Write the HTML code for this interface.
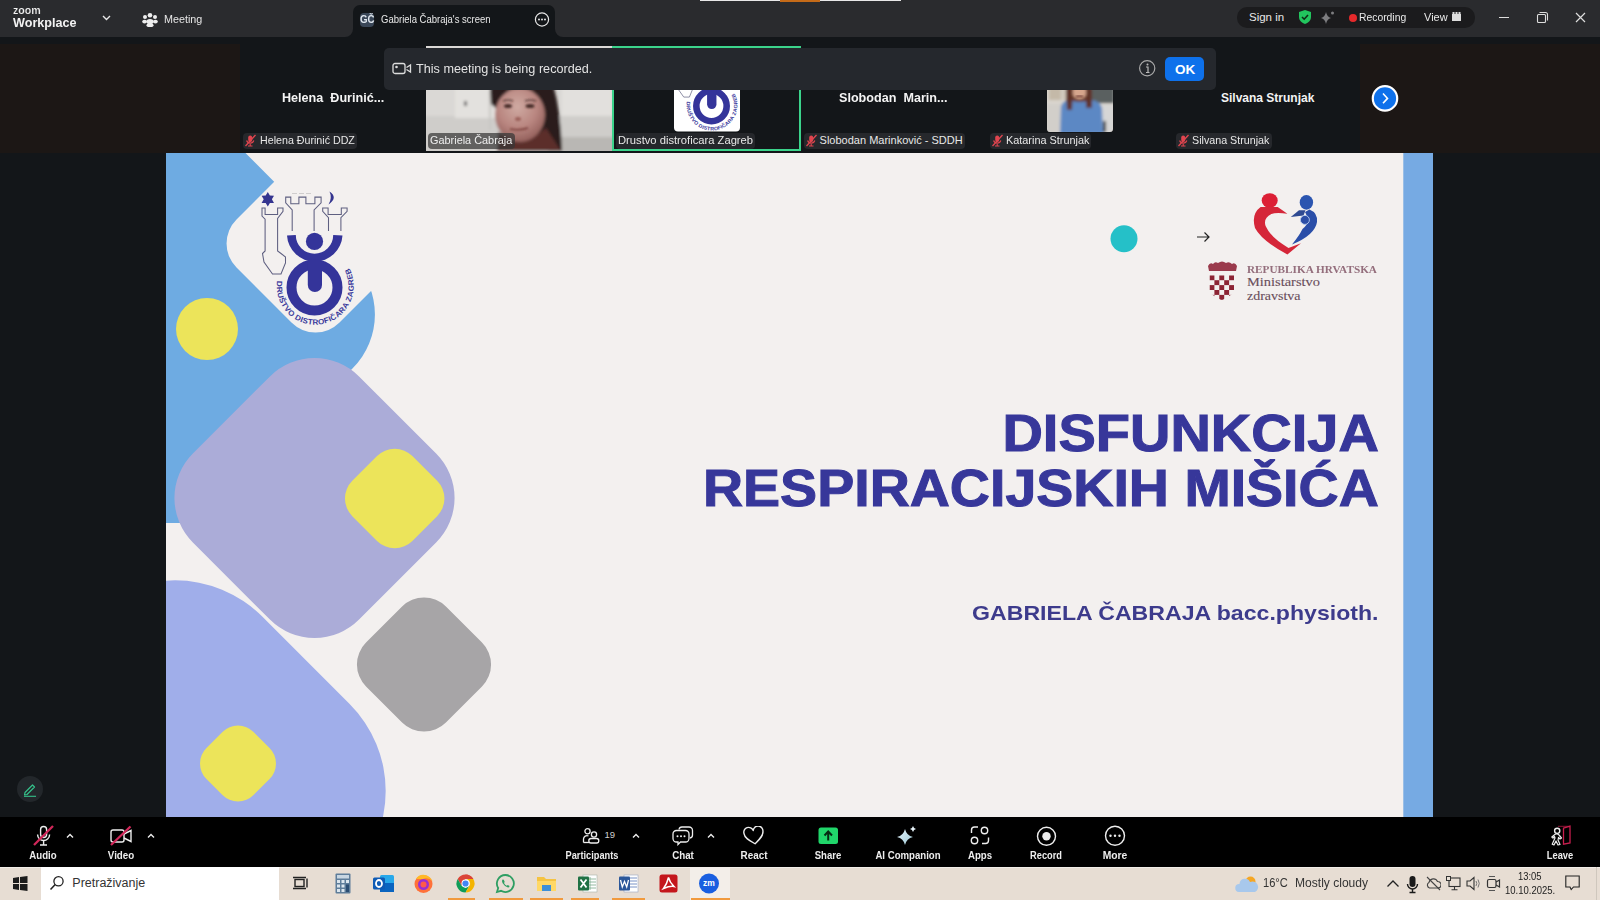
<!DOCTYPE html>
<html><head><meta charset="utf-8">
<style>
*{margin:0;padding:0;box-sizing:border-box}
html,body{width:1600px;height:900px;overflow:hidden;background:#131619;font-family:"Liberation Sans",sans-serif;color:#fff}
.a{position:absolute}
.t{position:absolute;white-space:nowrap;line-height:1}
</style></head><body>
<div class="a" style="left:0;top:0;width:1600px;height:37px;background:#2a2b2e"></div>
<div class="a" style="left:700px;top:0;width:201px;height:1px;background:#e8e8e8"></div>
<div class="a" style="left:780px;top:0;width:40px;height:2px;background:#c46a18"></div>
<div class="t" style="left:12.5px;top:4.69px;font-size:11px;font-weight:bold;color:#f2f2f2;transform:scaleX(0.97);transform-origin:left top;-webkit-text-stroke:0.2px #2a2b2e;">zoom</div>
<div class="t" style="left:13px;top:16.07px;font-size:13.5px;font-weight:bold;color:#f2f2f2;transform:scaleX(0.934);transform-origin:left top;">Workplace</div>
<svg class="a" style="left:100px;top:13px" width="14" height="10"><polyline points="3,3 6.5,6.5 10,3" fill="none" stroke="#e8e8e8" stroke-width="1.4"/></svg>
<svg class="a" style="left:142px;top:12px" width="16" height="16" viewBox="0 0 16 16">
<circle cx="8" cy="3.2" r="2.3" fill="#eee"/><circle cx="3" cy="5" r="2" fill="#eee"/><circle cx="13" cy="5" r="2" fill="#eee"/>
<ellipse cx="8" cy="9.5" rx="3.6" ry="2.6" fill="#eee"/><ellipse cx="2.6" cy="9.6" rx="2.4" ry="1.9" fill="#eee"/><ellipse cx="13.4" cy="9.6" rx="2.4" ry="1.9" fill="#eee"/>
<rect x="4.5" y="11.5" width="7" height="3.5" rx="1.7" fill="#eee"/></svg>
<div class="t" style="left:164px;top:14.27px;font-size:11.5px;font-weight:normal;color:#e6e6e6;transform:scaleX(0.936);transform-origin:left top;">Meeting</div>
<div class="a" style="left:353px;top:5px;width:202px;height:40px;background:#131619;border-radius:7px 7px 0 0"></div>
<svg class="a" style="left:345px;top:29px" width="8" height="8"><path d="M0,8 A8,8 0 0 0 8,0 V8 Z" fill="#131619"/></svg>
<svg class="a" style="left:555px;top:29px" width="8" height="8"><path d="M8,8 A8,8 0 0 1 0,0 V8 Z" fill="#131619"/></svg>
<div class="a" style="left:360px;top:13.4px;width:14px;height:14px;background:#3a4758;border-radius:4px"></div>
<div class="t" style="left:359.5px;top:15.34px;font-size:10px;font-weight:bold;color:#dfe6ee;transform:scaleX(0.97);transform-origin:left top;">GČ</div>
<div class="t" style="left:381px;top:14.39px;font-size:11px;font-weight:normal;color:#e8e8e8;transform:scaleX(0.864);transform-origin:left top;">Gabriela Čabraja's screen</div>
<svg class="a" style="left:533px;top:11px" width="18" height="18" viewBox="0 0 18 18"><circle cx="9" cy="8.5" r="6.6" fill="none" stroke="#e6e6e6" stroke-width="1.2"/>
<circle cx="6" cy="8.5" r="0.95" fill="#eee"/><circle cx="9" cy="8.5" r="0.95" fill="#eee"/><circle cx="12" cy="8.5" r="0.95" fill="#eee"/></svg>
<div class="a" style="left:1237px;top:7px;width:238px;height:21px;background:#1b1b1d;border-radius:10px"></div>
<div class="t" style="left:1249px;top:11.52px;font-size:11.5px;font-weight:normal;color:#e8e8e8;">Sign in</div>
<svg class="a" style="left:1297px;top:9px" width="16" height="16" viewBox="0 0 16 16"><path d="M8,1 L14,3 V8 C14,11.5 11,14 8,15 C5,14 2,11.5 2,8 V3 Z" fill="#22c55e"/>
<polyline points="5,8 7.2,10.2 11,6" fill="none" stroke="#0d2a14" stroke-width="1.6"/></svg>
<svg class="a" style="left:1320px;top:10px" width="16" height="14" viewBox="0 0 16 14"><path d="M6,2 Q7,7 11,8 Q7,9 6,14 Q5,9 1,8 Q5,7 6,2 Z" fill="#7d7d80"/><circle cx="12.5" cy="3" r="1.5" fill="#7d7d80"/></svg>
<div class="a" style="left:1349px;top:13.5px;width:8px;height:8px;background:#e5292b;border-radius:50%"></div>
<div class="t" style="left:1359px;top:11.52px;font-size:11.5px;font-weight:normal;color:#e8e8e8;transform:scaleX(0.9);transform-origin:left top;">Recording</div>
<div class="t" style="left:1424px;top:11.52px;font-size:11.5px;font-weight:normal;color:#e8e8e8;transform:scaleX(0.955);transform-origin:left top;">View</div>
<svg class="a" style="left:1451px;top:11px" width="11" height="11" viewBox="0 0 11 11"><rect x="1" y="3" width="9" height="7" fill="#ddd"/><rect x="1.5" y="1" width="2" height="2" fill="#ddd"/><rect x="4.5" y="1" width="2" height="2" fill="#ddd"/><rect x="7.5" y="1" width="2" height="2" fill="#ddd"/></svg>
<div class="a" style="left:1499px;top:16.5px;width:10px;height:1.2px;background:#ddd"></div>
<svg class="a" style="left:1536px;top:11px" width="13" height="13" viewBox="0 0 13 13"><rect x="1.5" y="3.5" width="8" height="8" rx="1" fill="none" stroke="#ddd" stroke-width="1.1"/><path d="M3.5,1.5 H9.5 A2,2 0 0 1 11.5,3.5 V9.5" fill="none" stroke="#ddd" stroke-width="1.1"/></svg>
<svg class="a" style="left:1575px;top:11.5px" width="11" height="11" viewBox="0 0 11 11"><path d="M1,1 L10,10 M10,1 L1,10" stroke="#ddd" stroke-width="1.2"/></svg>
<div class="a" style="left:0;top:44px;width:240px;height:109px;background:#1c1715"></div>
<div class="a" style="left:1360px;top:44px;width:240px;height:109px;background:#1c1715"></div>
<svg class="a" style="left:426px;top:46px" width="186" height="105" viewBox="426 46 186 105">
<defs><filter id="bl" x="-10%" y="-10%" width="120%" height="120%"><feGaussianBlur stdDeviation="1.8"/></filter>
<filter id="bl2"><feGaussianBlur stdDeviation="0.8"/></filter>
<radialGradient id="face" cx="0.45" cy="0.35" r="0.7"><stop offset="0" stop-color="#cfaaa2"/><stop offset="0.55" stop-color="#b98680"/><stop offset="1" stop-color="#8e5a56"/></radialGradient></defs>
<rect x="426" y="46" width="186" height="105" fill="#dad8d5"/>
<g filter="url(#bl)">
<rect x="420" y="116" width="200" height="40" fill="#cfcdca"/>
<rect x="548" y="137" width="70" height="16" fill="#b9b7b4"/>
<rect x="455" y="88" width="42" height="30" fill="#e3e1de"/>
<rect x="562" y="86" width="50" height="30" fill="#e2e0dd"/>
<rect x="464" y="101" width="3" height="5" fill="#6a6a6a"/>
<rect x="489" y="90" width="2" height="40" fill="#c8c6c3"/>
<path d="M490,84 H553 Q561,112 562,151 H520 L520,120 L498,110 L491,104 Z" fill="#2a1d1b"/>
<path d="M498,132 Q522,148 546,128 L561,151 H497 Z" fill="#5c2e2b"/>
<ellipse cx="520" cy="115" rx="25" ry="27" fill="url(#face)"/>
</g>
<g filter="url(#bl2)">
<ellipse cx="508" cy="106" rx="4" ry="2" fill="#4a2e2c"/>
<ellipse cx="530" cy="106" rx="4.5" ry="2" fill="#4a2e2c"/>
<path d="M503,101 Q508,99 513,101 M525,101 Q531,99 536,101" stroke="#3a2422" stroke-width="1.2" fill="none"/>
<ellipse cx="518" cy="119" rx="3" ry="2" fill="#9c605a"/>
<path d="M510,129 Q519,131 528,128" stroke="#7a3e3a" stroke-width="1.5" fill="none"/>
</g>
</svg>
<svg class="a" style="left:1047px;top:46px" width="66" height="86" viewBox="1047 46 66 86">
<defs><clipPath id="kc"><path d="M1047,52 H1113 V128.5 A3.5,3.5 0 0 1 1109.5,132 H1050.5 A3.5,3.5 0 0 1 1047,128.5 Z"/></clipPath></defs>
<g clip-path="url(#kc)">
<rect x="1047" y="46" width="66" height="86" fill="#d9d5ce"/>
<g filter="url(#bl)">
<rect x="1049" y="86" width="12" height="14" fill="#c4b9a8"/>
<rect x="1062" y="86" width="6" height="14" fill="#d0c8bb"/>
<rect x="1092" y="86" width="22" height="17" fill="#5a6060"/>
<rect x="1047" y="104" width="18" height="30" fill="#d2cfca"/>
<rect x="1095" y="105" width="18" height="27" fill="#d6d6d6"/>
<path d="M1066,86 H1091 V109 H1066 Z" fill="#6b3b2b"/>
<ellipse cx="1079.5" cy="92" rx="7" ry="7" fill="#d6a58c"/>
<path d="M1060,134 L1061,106 Q1064,100 1070,100 Q1080,104 1090,100 Q1099,100 1102,108 L1103,134 Z" fill="#5b88c4"/>
<rect x="1103" y="121" width="3" height="11" fill="#3a3a3a"/>
<path d="M1066,88 H1073 L1072,110 H1067 Z M1086,88 H1092 L1092,108 H1086 Z" fill="#5e3326"/>
</g>
<rect x="1076" y="95.5" width="7" height="1.5" fill="#5a2a22" filter="url(#bl2)"/>
</g>
</svg>
<div class="a" style="left:612px;top:45.5px;width:189px;height:105.5px;border:2px solid #3bd38b"></div>
<svg class="a" style="left:674px;top:60px" width="66" height="72" viewBox="674 60 66 72">
<rect x="674" y="60" width="66" height="71.5" rx="4" fill="#ffffff"/>
<g transform="translate(711.5,106) scale(0.66) translate(-314.5,-287.5)">
<g fill="none" stroke="#5e5f80" stroke-width="1.05" stroke-linejoin="miter">
<path d="M292.2,230.9 V209.9 L285.7,202.9 V197.1 H290.8 V203.7 H298.9 V197.1 H305.9 V203.7 H314.9 V197.1 H321.1 V202.9 L314.1,209.9 V230.9"/>
<path d="M265.1,251 V219.2 L262,216.1 V207.9 H265.1 V214.5 H277.6 V207.9 H283 V211.4 L277.6,218.4 V251 L281,253.5 L285.5,257 V263 L281,274 H272.5 L264,262 L262.5,253.5 Z"/>
<path d="M328.5,230.9 V217.7 L322.7,211.4 V207.9 H328.1 V214.5 H341.3 V207.9 H347.1 V211.4 L340.9,217.7 V230.9"/>
<path d="M292,193.5 H297 M299,193.5 H304 M306,193.5 H311" stroke-width="0.5" stroke="#aaa"/>
</g>
<path d="M267.8,192 L269.9,195.6 L274,195.7 L271.9,199.3 L274,202.9 L269.9,203 L267.8,206.6 L265.7,203 L261.6,202.9 L263.7,199.3 L261.6,195.7 L265.7,195.6 Z" fill="#34348f"/>
<path d="M329.5,191.5 Q338.5,197.5 328.5,204.5 Q332.5,198 329.5,191.5 Z" fill="#34348f"/>
<circle cx="314.5" cy="241.4" r="8.6" fill="#34349a"/>
<path d="M287,235.5 A27.8,27.8 0 0 0 342.5,235.5 L333.2,235 A18.7,18.7 0 0 1 295.8,235 Z" fill="#34349a"/>
<circle cx="314.5" cy="287.5" r="23" fill="none" stroke="#34349a" stroke-width="10"/>
<path d="M307.8,262 H322 V285 A7.1,7.1 0 0 1 307.8,285 Z" fill="#34349a"/>
<path id="arct" d="M277.1,280.9 A38.5,38.5 0 1 0 348.3,266.5" fill="none"/>
<text font-family="Liberation Sans" font-weight="bold" font-size="7.6" fill="#3a3a9c" letter-spacing="0.2"><textPath href="#arct" textLength="145" lengthAdjust="spacingAndGlyphs">DRUŠTVO DISTROFIČARA ZAGREB</textPath></text>
</g>
</svg>
<div class="a" style="left:384px;top:48px;width:832px;height:42px;background:#25282d;border-radius:5px"></div>
<svg class="a" style="left:392px;top:62px" width="20" height="13" viewBox="0 0 20 13"><rect x="1" y="1.5" width="12" height="10" rx="2" fill="none" stroke="#ddd" stroke-width="1.3"/><circle cx="4.5" cy="5" r="1.3" fill="#ddd"/><path d="M14.5,5.5 L18.5,3 V10 L14.5,7.5" fill="none" stroke="#ddd" stroke-width="1.3"/></svg>
<div class="t" style="left:416px;top:61.80px;font-size:13px;font-weight:normal;color:#e3e3e3;transform:scaleX(0.972);transform-origin:left top;">This meeting is being recorded.</div>
<svg class="a" style="left:1138px;top:59px" width="19" height="19" viewBox="0 0 19 19"><circle cx="9.2" cy="9.3" r="7.6" fill="none" stroke="#aaa" stroke-width="1.2"/><circle cx="9.5" cy="5.6" r="1" fill="#bbb"/><path d="M8,8 H10 V13.5 M8,13.5 H11.5" fill="none" stroke="#bbb" stroke-width="1.2"/></svg>
<div class="a" style="left:1165px;top:57px;width:39px;height:23.5px;background:#0e71eb;border-radius:5px"></div>
<div class="t" style="left:1175px;top:62.57px;font-size:13.5px;font-weight:bold;color:#fff;">OK</div>
<div class="t" style="left:282px;top:92.09px;font-size:12px;font-weight:bold;color:#f4f4f4;transform:scaleX(1.05);transform-origin:left top;">Helena&nbsp; Đurinić...</div>
<div class="t" style="left:839px;top:92.09px;font-size:12px;font-weight:bold;color:#f4f4f4;transform:scaleX(1.05);transform-origin:left top;">Slobodan&nbsp; Marin...</div>
<div class="t" style="left:1221px;top:92.09px;font-size:12px;font-weight:bold;color:#f4f4f4;">Silvana Strunjak</div>
<div class="a" style="left:243px;top:133px;width:114px;height:15.5px;background:#26282c;border-radius:4px"></div><svg class="a" style="left:244px;top:134px" width="13" height="13" viewBox="0 0 13 13"><rect x="4.2" y="1.5" width="4" height="6.5" rx="2" fill="#e0454f"/><path d="M2.6,6.5 A3.8,3.8 0 0 0 9.8,6.5" fill="none" stroke="#e0454f" stroke-width="1.2"/><path d="M6.2,10 V12 M4,12 H8.5" stroke="#e0454f" stroke-width="1.1"/><path d="M1.5,12 L11.5,1" stroke="#e0454f" stroke-width="1.3"/></svg><div class="t" style="left:259.5px;top:135.44px;font-size:11px;font-weight:normal;color:#e8e8e8;transform:scaleX(0.97);transform-origin:left top;">Helena Đurinić DDZ</div>
<div class="a" style="left:428px;top:133px;width:87px;height:15.5px;background:rgba(55,55,55,0.72);border-radius:4px"></div>
<div class="t" style="left:430px;top:135.44px;font-size:11px;font-weight:normal;color:#eeeeee;transform:scaleX(0.99);transform-origin:left top;">Gabriela Čabraja</div>
<div class="a" style="left:616px;top:133px;width:139px;height:15.5px;background:#25272b;border-radius:4px"></div>
<div class="t" style="left:617.6px;top:135.44px;font-size:11px;font-weight:normal;color:#e8e8e8;transform:scaleX(1.018);transform-origin:left top;">Drustvo distroficara Zagreb</div>
<div class="a" style="left:803.5px;top:133px;width:161.5px;height:15.5px;background:#26282c;border-radius:4px"></div><svg class="a" style="left:804.5px;top:134px" width="13" height="13" viewBox="0 0 13 13"><rect x="4.2" y="1.5" width="4" height="6.5" rx="2" fill="#e0454f"/><path d="M2.6,6.5 A3.8,3.8 0 0 0 9.8,6.5" fill="none" stroke="#e0454f" stroke-width="1.2"/><path d="M6.2,10 V12 M4,12 H8.5" stroke="#e0454f" stroke-width="1.1"/><path d="M1.5,12 L11.5,1" stroke="#e0454f" stroke-width="1.3"/></svg><div class="t" style="left:819.6px;top:135.44px;font-size:11px;font-weight:normal;color:#e8e8e8;">Slobodan Marinković - SDDH</div>
<div class="a" style="left:989.5px;top:133px;width:101.5px;height:15.5px;background:#26282c;border-radius:4px"></div><svg class="a" style="left:990.5px;top:134px" width="13" height="13" viewBox="0 0 13 13"><rect x="4.2" y="1.5" width="4" height="6.5" rx="2" fill="#e0454f"/><path d="M2.6,6.5 A3.8,3.8 0 0 0 9.8,6.5" fill="none" stroke="#e0454f" stroke-width="1.2"/><path d="M6.2,10 V12 M4,12 H8.5" stroke="#e0454f" stroke-width="1.1"/><path d="M1.5,12 L11.5,1" stroke="#e0454f" stroke-width="1.3"/></svg><div class="t" style="left:1006px;top:135.44px;font-size:11px;font-weight:normal;color:#e8e8e8;transform:scaleX(0.988);transform-origin:left top;">Katarina Strunjak</div>
<div class="a" style="left:1176px;top:133px;width:96px;height:15.5px;background:#26282c;border-radius:4px"></div><svg class="a" style="left:1177px;top:134px" width="13" height="13" viewBox="0 0 13 13"><rect x="4.2" y="1.5" width="4" height="6.5" rx="2" fill="#e0454f"/><path d="M2.6,6.5 A3.8,3.8 0 0 0 9.8,6.5" fill="none" stroke="#e0454f" stroke-width="1.2"/><path d="M6.2,10 V12 M4,12 H8.5" stroke="#e0454f" stroke-width="1.1"/><path d="M1.5,12 L11.5,1" stroke="#e0454f" stroke-width="1.3"/></svg><div class="t" style="left:1192px;top:135.44px;font-size:11px;font-weight:normal;color:#e8e8e8;transform:scaleX(0.974);transform-origin:left top;">Silvana Strunjak</div>
<svg class="a" style="left:1370px;top:83px" width="30" height="30" viewBox="0 0 30 30"><circle cx="15" cy="15.4" r="12.2" fill="#0e71eb" stroke="#fff" stroke-width="2.2"/><polyline points="13,10.5 17.5,15.4 13,20.3" fill="none" stroke="#fff" stroke-width="1.6"/></svg>
<div class="a" id="slide" style="left:166px;top:153px;width:1267px;height:664px;background:#f3f0ef;overflow:hidden">
<svg class="a" style="left:0;top:0" width="1267" height="664" viewBox="166 153 1267 664">
<path d="M166,153 H245.5 L352.7,260.8 A76,76 0 0 1 352.7,368.2 L198,523 L166,523 Z" fill="#6eabe2"/>
<rect x="242.7" y="170.7" width="145.7" height="145.7" rx="34" fill="#f3f0ef" transform="rotate(45 315.5 243.5)"/>

<g fill="none" stroke="#5e5f80" stroke-width="1.05" stroke-linejoin="miter">
<path d="M292.2,230.9 V209.9 L285.7,202.9 V197.1 H290.8 V203.7 H298.9 V197.1 H305.9 V203.7 H314.9 V197.1 H321.1 V202.9 L314.1,209.9 V230.9"/>
<path d="M265.1,251 V219.2 L262,216.1 V207.9 H265.1 V214.5 H277.6 V207.9 H283 V211.4 L277.6,218.4 V251 L281,253.5 L285.5,257 V263 L281,274 H272.5 L264,262 L262.5,253.5 Z"/>
<path d="M328.5,230.9 V217.7 L322.7,211.4 V207.9 H328.1 V214.5 H341.3 V207.9 H347.1 V211.4 L340.9,217.7 V230.9"/>
<path d="M292,193.5 H297 M299,193.5 H304 M306,193.5 H311" stroke-width="0.5" stroke="#aaa"/>
</g>
<path d="M267.8,192 L269.9,195.6 L274,195.7 L271.9,199.3 L274,202.9 L269.9,203 L267.8,206.6 L265.7,203 L261.6,202.9 L263.7,199.3 L261.6,195.7 L265.7,195.6 Z" fill="#34348f"/>
<path d="M329.5,191.5 Q338.5,197.5 328.5,204.5 Q332.5,198 329.5,191.5 Z" fill="#34348f"/>
<circle cx="314.5" cy="241.4" r="8.6" fill="#34349a"/>
<path d="M287,235.5 A27.8,27.8 0 0 0 342.5,235.5 L333.2,235 A18.7,18.7 0 0 1 295.8,235 Z" fill="#34349a"/>
<circle cx="314.5" cy="287.5" r="23" fill="none" stroke="#34349a" stroke-width="10"/>
<path d="M307.8,262 H322 V285 A7.1,7.1 0 0 1 307.8,285 Z" fill="#34349a"/>
<path id="arcs" d="M277.1,280.9 A38.5,38.5 0 1 0 348.3,266.5" fill="none"/>
<text font-family="Liberation Sans" font-weight="bold" font-size="7.6" fill="#3a3a9c" letter-spacing="0.2"><textPath href="#arcs" textLength="145" lengthAdjust="spacingAndGlyphs">DRUŠTVO DISTROFIČARA ZAGREB</textPath></text>

<circle cx="207" cy="329" r="31" fill="#ece45a"/>
<rect x="197.0" y="380.5" width="235.0" height="235.0" rx="63" fill="#abacd8" transform="rotate(45 314.5 498)"/>
<rect x="352.2" y="456.0" width="85.0" height="85.0" rx="25" fill="#ece45a" transform="rotate(45 394.7 498.5)"/>
<rect x="367.5" y="608.0" width="113.0" height="113.0" rx="31" fill="#a7a5a7" transform="rotate(45 424 664.5)"/>
<rect x="-10.0" y="606.0" width="370.0" height="370.0" rx="123" fill="#a0aeea" transform="rotate(45 175 791)"/>
<rect x="204.7" y="730.2" width="66.6" height="66.6" rx="22" fill="#ece45a" transform="rotate(45 238 763.5)"/>
<rect x="1403.3" y="153" width="30" height="664" fill="#76aae3"/>
<circle cx="1124" cy="238.8" r="13.5" fill="#25c0c8"/>
<path d="M1197,237 H1209 M1204.5,232.5 L1209,237 L1204.5,241.5" fill="none" stroke="#222" stroke-width="1.2"/>

<ellipse cx="1269.7" cy="200.6" rx="8" ry="7.4" fill="#dc1f35"/>
<path d="M1260.6,207 H1277.7 L1287.4,213.7 Q1276,212 1271.4,214 Q1263,218 1265.6,226 Q1271,238 1288.5,247.9 L1301,243.2 L1287.4,254.5 Q1262,241 1255,228 Q1251,214 1260.6,207 Z" fill="#d52639"/>
<ellipse cx="1306.4" cy="202.4" rx="6.7" ry="7.3" fill="#2b55b0"/>
<path d="M1309.5,209.5 Q1318,213 1317,222 Q1315,235 1292,244.5 Q1299,236 1302.5,229 Q1307.5,225 1307.5,221 Q1307,215 1305,212 Z" fill="#2a4ea8"/>
<path d="M1290.8,217 L1299,210.2 H1305.5 L1303.5,215.5 Z" fill="#2e4a92"/>
<circle cx="1304.9" cy="219.9" r="4.5" fill="#2c4ea6" stroke="#b9cdee" stroke-width="0.9"/>


<path d="M1208,266 Q1210,262 1213,264 Q1215,261 1218,263 Q1222,260 1226,263 Q1229,261 1232,264 Q1235,262 1237,266 L1236,271 H1209 Z" fill="#9a3a4c"/>
<g clip-path="url(#shield)"><rect x="1209.5" y="275.3" width="4.9" height="4.9" fill="#8c2434"/><rect x="1219.3" y="275.3" width="4.9" height="4.9" fill="#8c2434"/><rect x="1229.1" y="275.3" width="4.9" height="4.9" fill="#8c2434"/><rect x="1214.4" y="280.2" width="4.9" height="4.9" fill="#8c2434"/><rect x="1224.2" y="280.2" width="4.9" height="4.9" fill="#8c2434"/><rect x="1209.5" y="285.1" width="4.9" height="4.9" fill="#8c2434"/><rect x="1219.3" y="285.1" width="4.9" height="4.9" fill="#8c2434"/><rect x="1229.1" y="285.1" width="4.9" height="4.9" fill="#8c2434"/><rect x="1214.4" y="290.0" width="4.9" height="4.9" fill="#8c2434"/><rect x="1224.2" y="290.0" width="4.9" height="4.9" fill="#8c2434"/><rect x="1209.5" y="294.9" width="4.9" height="4.9" fill="#8c2434"/><rect x="1219.3" y="294.9" width="4.9" height="4.9" fill="#8c2434"/><rect x="1229.1" y="294.9" width="4.9" height="4.9" fill="#8c2434"/></g>
<clipPath id="shield"><path d="M1209.5,275.3 H1234 V293 L1221.75,300.5 L1209.5,293 Z"/></clipPath>

<text x="1247" y="272.5" font-family="Liberation Serif" font-weight="bold" font-size="9.5" fill="#8a6070" textLength="130" lengthAdjust="spacingAndGlyphs" opacity="0.9">REPUBLIKA HRVATSKA</text>
<text x="1247" y="286" font-family="Liberation Serif" font-size="13" fill="#6a4e5c" stroke="#6a4e5c" stroke-width="0.12" textLength="73" lengthAdjust="spacingAndGlyphs">Ministarstvo</text>
<text x="1247" y="299.7" font-family="Liberation Serif" font-size="13" fill="#6a4e5c" stroke="#6a4e5c" stroke-width="0.12" textLength="53.5" lengthAdjust="spacingAndGlyphs">zdravstva</text>
</svg>
<div class="t" style="right:54.5px;top:255px;font-size:51px;font-weight:bold;color:#37379a;-webkit-text-stroke:1px #37379a;transform:scaleX(1.098);transform-origin:right top">DISFUNKCIJA</div>
<div class="t" style="right:54.5px;top:309px;font-size:52px;font-weight:bold;color:#37379a;-webkit-text-stroke:1px #37379a;transform:scaleX(1.068);transform-origin:right top">RESPIRACIJSKIH MIŠIĆA</div>
<div class="t" style="right:55px;top:449px;font-size:21px;font-weight:bold;color:#3d3b8c;transform:scaleX(1.1);transform-origin:right top">GABRIELA ČABRAJA bacc.physioth.</div>
</div>
<div class="a" style="left:17px;top:776px;width:26px;height:26px;border-radius:50%;background:#23272b"></div>
<svg class="a" style="left:21px;top:780px" width="18" height="18" viewBox="0 0 18 18"><path d="M4,12.5 L11.5,5 L13.5,7 L6,14.5 L3.5,15 Z" fill="none" stroke="#35c08a" stroke-width="1.2" stroke-linejoin="round"/><path d="M3,16.3 H15" stroke="#35c08a" stroke-width="1.1"/></svg>
<div class="a" style="left:0;top:817px;width:1600px;height:50px;background:#000"></div>
<div class="t" style="left:-16.6px;width:120px;text-align:center;top:849.51px;font-size:10.5px;font-weight:bold;color:#ededed;transform:scaleX(0.92)">Audio</div>
<div class="t" style="left:60.5px;width:120px;text-align:center;top:849.51px;font-size:10.5px;font-weight:bold;color:#ededed;transform:scaleX(0.93)">Video</div>
<div class="t" style="left:531.75px;width:120px;text-align:center;top:849.51px;font-size:10.5px;font-weight:bold;color:#ededed;transform:scaleX(0.88)">Participants</div>
<div class="t" style="left:623.2px;width:120px;text-align:center;top:849.51px;font-size:10.5px;font-weight:bold;color:#ededed;transform:scaleX(0.93)">Chat</div>
<div class="t" style="left:693.8px;width:120px;text-align:center;top:849.51px;font-size:10.5px;font-weight:bold;color:#ededed;transform:scaleX(0.94)">React</div>
<div class="t" style="left:768.3px;width:120px;text-align:center;top:849.51px;font-size:10.5px;font-weight:bold;color:#ededed;transform:scaleX(0.91)">Share</div>
<div class="t" style="left:848px;width:120px;text-align:center;top:849.51px;font-size:10.5px;font-weight:bold;color:#ededed;transform:scaleX(0.915)">AI Companion</div>
<div class="t" style="left:920px;width:120px;text-align:center;top:849.51px;font-size:10.5px;font-weight:bold;color:#ededed;transform:scaleX(0.92)">Apps</div>
<div class="t" style="left:986.2px;width:120px;text-align:center;top:849.51px;font-size:10.5px;font-weight:bold;color:#ededed;transform:scaleX(0.88)">Record</div>
<div class="t" style="left:1055px;width:120px;text-align:center;top:849.51px;font-size:10.5px;font-weight:bold;color:#ededed;transform:scaleX(0.98)">More</div>
<div class="t" style="left:1500.2px;width:120px;text-align:center;top:849.51px;font-size:10.5px;font-weight:bold;color:#ededed;transform:scaleX(0.89)">Leave</div>
<svg class="a" style="left:32px;top:824px" width="24" height="24" viewBox="0 0 24 24"><rect x="8.6" y="2.5" width="6" height="11" rx="3" fill="none" stroke="#ededed" stroke-width="1.4"/><path d="M5.6,10.5 A6,6 0 0 0 17.6,10.5" fill="none" stroke="#ededed" stroke-width="1.4"/><path d="M11.6,16.5 V20.5 M8,21 H15" stroke="#ededed" stroke-width="1.4"/><path d="M2,21 L21,2" stroke="#d1285a" stroke-width="2.3"/></svg>
<svg class="a" style="left:66px;top:833px" width="8" height="6" viewBox="0 0 8 6"><polyline points="1,4.5 4,1.5 7,4.5" fill="none" stroke="#ededed" stroke-width="1.4"/></svg>
<svg class="a" style="left:109px;top:824px" width="24" height="24" viewBox="0 0 24 24"><rect x="2" y="6" width="13" height="12" rx="2" fill="none" stroke="#ededed" stroke-width="1.4"/><path d="M15,10 L22,6.5 V17.5 L15,14" fill="none" stroke="#ededed" stroke-width="1.4"/><path d="M2,21 L21.5,2.5" stroke="#d1285a" stroke-width="2.3"/></svg>
<svg class="a" style="left:147px;top:833px" width="8" height="6" viewBox="0 0 8 6"><polyline points="1,4.5 4,1.5 7,4.5" fill="none" stroke="#ededed" stroke-width="1.4"/></svg>
<svg class="a" style="left:582px;top:827px" width="18" height="18" viewBox="0 0 18 18"><circle cx="5.5" cy="4.2" r="2.6" fill="none" stroke="#ededed" stroke-width="1.3"/><path d="M1.5,15.5 V12 A3.5,3.5 0 0 1 6.5,9" fill="none" stroke="#ededed" stroke-width="1.3"/><circle cx="12" cy="7.5" r="2.6" fill="none" stroke="#ededed" stroke-width="1.3"/><rect x="6.8" y="11.5" width="10" height="4.5" rx="2.2" fill="none" stroke="#ededed" stroke-width="1.3"/><path d="M1.5,15.5 H7" stroke="#ededed" stroke-width="1.3"/></svg>
<div class="t" style="left:604.5px;top:830px;font-size:9.5px;color:#cfcfcf">19</div>
<svg class="a" style="left:632px;top:833px" width="8" height="6" viewBox="0 0 8 6"><polyline points="1,4.5 4,1.5 7,4.5" fill="none" stroke="#ededed" stroke-width="1.4"/></svg>
<svg class="a" style="left:672px;top:825px" width="22" height="21" viewBox="0 0 22 21"><path d="M7,4.5 A3,3 0 0 1 10,2 H17 A3.5,3.5 0 0 1 20.5,5.5 V10 A3,3 0 0 1 18,13" fill="none" stroke="#ededed" stroke-width="1.3"/><path d="M4.5,5.5 H13.5 A3.5,3.5 0 0 1 17,9 V13.5 A3.5,3.5 0 0 1 13.5,17 H8.5 L6,19.5 V17 H4.5 A3.5,3.5 0 0 1 1,13.5 V9 A3.5,3.5 0 0 1 4.5,5.5 Z" fill="#000" stroke="#ededed" stroke-width="1.3"/><circle cx="5.5" cy="11.3" r="1" fill="#ededed"/><circle cx="9" cy="11.3" r="1" fill="#ededed"/><circle cx="12.5" cy="11.3" r="1" fill="#ededed"/></svg>
<svg class="a" style="left:707px;top:833px" width="8" height="6" viewBox="0 0 8 6"><polyline points="1,4.5 4,1.5 7,4.5" fill="none" stroke="#ededed" stroke-width="1.4"/></svg>
<svg class="a" style="left:743px;top:826px" width="22" height="20" viewBox="0 0 22 20"><path d="M11,17.8 C6,14 1.5,11 1.5,6.5 A4.8,4.8 0 0 1 11,4.5 A4.8,4.8 0 0 1 20.5,6.5 C20.5,11 16,14 11,17.8 Z" fill="none" stroke="#ededed" stroke-width="1.4" stroke-linejoin="round" transform="rotate(-8 11 10)"/></svg>
<svg class="a" style="left:818px;top:827px" width="21" height="18" viewBox="0 0 21 18"><rect x="0.5" y="0.5" width="19.5" height="16.5" rx="2.5" fill="#20d66a"/><path d="M10.2,13.5 V5 M6.5,8.5 L10.2,4.5 L14,8.5" fill="none" stroke="#062a12" stroke-width="2"/></svg>
<svg class="a" style="left:896px;top:825px" width="22" height="21" viewBox="0 0 22 21"><defs><linearGradient id="sg" x1="0" y1="0" x2="1" y2="1"><stop offset="0" stop-color="#e6f6ff"/><stop offset="1" stop-color="#9ec9d6"/></linearGradient></defs><path d="M9,4 Q10.5,10.5 17,12 Q10.5,13.5 9,20 Q7.5,13.5 1,12 Q7.5,10.5 9,4 Z" fill="url(#sg)"/><path d="M17,1 Q17.6,3.4 20,4 Q17.6,4.6 17,7 Q16.4,4.6 14,4 Q16.4,3.4 17,1 Z" fill="#e8f4fa"/></svg>
<svg class="a" style="left:969px;top:825px" width="22" height="21" viewBox="0 0 22 21"><path d="M2.5,8 V5 A3,3 0 0 1 5.5,2 H9" fill="none" stroke="#ededed" stroke-width="1.4"/><circle cx="15.5" cy="5.5" r="3.2" fill="none" stroke="#ededed" stroke-width="1.4"/><circle cx="5.5" cy="15.5" r="3.2" fill="none" stroke="#ededed" stroke-width="1.4"/><path d="M19.5,12.5 V15.5 A3,3 0 0 1 16.5,18.5 H13" fill="none" stroke="#ededed" stroke-width="1.4"/></svg>
<svg class="a" style="left:1036px;top:826px" width="21" height="21" viewBox="0 0 21 21"><circle cx="10.5" cy="10.3" r="9" fill="none" stroke="#ededed" stroke-width="1.4"/><circle cx="10.5" cy="10.3" r="4.2" fill="#ededed"/></svg>
<svg class="a" style="left:1104px;top:825px" width="22" height="22" viewBox="0 0 22 22"><circle cx="11" cy="10.8" r="9.5" fill="none" stroke="#ededed" stroke-width="1.4"/><circle cx="6.5" cy="10.8" r="1.2" fill="#ededed"/><circle cx="11" cy="10.8" r="1.2" fill="#ededed"/><circle cx="15.5" cy="10.8" r="1.2" fill="#ededed"/></svg>
<svg class="a" style="left:1549px;top:824px" width="23" height="23" viewBox="0 0 23 23"><path d="M14.5,4.2 L21,2.2 V19 L14.5,20.2 Z" fill="none" stroke="#c81e4e" stroke-width="1.3"/><path d="M9,2.3 H21" stroke="#c81e4e" stroke-width="1" opacity="0.7"/><circle cx="8.2" cy="6.8" r="2.6" fill="none" stroke="#ededed" stroke-width="1.4"/><path d="M6.5,10 Q9,9.5 10,11 L12.5,14 L11,15 L9.5,13.5 L9,16 L11,20.5 L9,21 L7,17 L5,21 L3.2,20.2 L6,14 L5.5,12.5 L4,14.2 L2.8,13 Z" fill="none" stroke="#ededed" stroke-width="1.2" stroke-linejoin="round"/></svg>
<div class="a" style="left:0;top:866.5px;width:1600px;height:33.5px;background:#e7ddd3;border-top:1px solid #f1ece7"></div>
<div class="a" style="left:1596px;top:866.5px;width:1px;height:33.5px;background:#cfc7bd"></div>
<svg class="a" style="left:13px;top:876px" width="15" height="15" viewBox="0 0 15 15"><path d="M0,2 L6,1.1 V7 H0 Z M7,1 L14.5,0 V7 H7 Z M0,8 H6 V13.9 L0,13 Z M7,8 H14.5 V15 L7,14 Z" fill="#1c1c1c"/></svg>
<div class="a" style="left:41px;top:866.5px;width:238px;height:33.5px;background:#fff"></div>
<svg class="a" style="left:49px;top:875px" width="16" height="16" viewBox="0 0 16 16"><circle cx="9.5" cy="6.3" r="4.6" fill="none" stroke="#222" stroke-width="1.3"/><path d="M6.2,9.6 L1.5,14.6" stroke="#222" stroke-width="1.5"/></svg>
<div class="t" style="left:72.3px;top:877.3px;font-size:12.5px;color:#333">Pretraživanje</div>
<svg class="a" style="left:292px;top:876px" width="17" height="14" viewBox="0 0 17 14"><rect x="3" y="3.5" width="9" height="7" fill="none" stroke="#222" stroke-width="1.4"/><path d="M1,1.5 H14 M1,12.5 H14 M15,2.5 V11.5" stroke="#222" stroke-width="1.4"/></svg>
<svg class="a" style="left:335px;top:873px" width="16" height="21" viewBox="0 0 16 21"><rect x="0.5" y="0.5" width="15" height="20" rx="1" fill="#5e7d9a"/><rect x="2" y="2" width="12" height="3.5" fill="#c8d6e2"/><g fill="#dce6ee"><rect x="2" y="7" width="3" height="3"/><rect x="6.5" y="7" width="3" height="3"/><rect x="11" y="7" width="3" height="3"/><rect x="2" y="11.5" width="3" height="3"/><rect x="6.5" y="11.5" width="3" height="3"/><rect x="2" y="16" width="3" height="3"/><rect x="6.5" y="16" width="3" height="3"/></g><rect x="11" y="11.5" width="3" height="7.5" fill="#2b4d73"/></svg>
<svg class="a" style="left:372px;top:873px" width="23" height="21" viewBox="0 0 23 21"><rect x="8" y="2" width="14" height="17" rx="1.5" fill="#28a8ea"/><path d="M8,10 L22,10 V19 H8 Z" fill="#0a64c0"/><rect x="1" y="4.5" width="12" height="12" rx="1.5" fill="#0f5bb5"/><ellipse cx="7" cy="10.5" rx="3" ry="3.5" fill="none" stroke="#fff" stroke-width="1.8"/></svg>
<svg class="a" style="left:413px;top:873px" width="21" height="21" viewBox="0 0 21 21"><circle cx="10.5" cy="11" r="9" fill="#ff7139"/><circle cx="10.5" cy="11.5" r="5.5" fill="#9b2fd1"/><path d="M3,6 Q6,1 12,2 Q17,3 19.5,8 Q15,4 10,6 Z" fill="#ffb827"/><circle cx="10.5" cy="11.5" r="3" fill="#ff5a4a"/></svg>
<svg class="a" style="left:455px;top:873px" width="21" height="21" viewBox="0 0 21 21"><path d="M10.5,1.5 A9,9 0 0 1 18.3,6 H10.5 Z" fill="#db4437"/><path d="M10.5,1.5 A9,9 0 0 0 2.7,6 L6.6,12.8 L10.5,6 H18.3 A9,9 0 0 0 10.5,1.5 Z" fill="#db4437"/><path d="M2.7,6 A9,9 0 0 0 10.5,19.5 L14.4,12.8 L10.5,15 L6.6,12.8 Z" fill="#0f9d58"/><path d="M18.3,6 A9,9 0 0 1 10.5,19.5 L14.4,12.8 A4.5,4.5 0 0 0 10.5,6 Z" fill="#f4b400"/><circle cx="10.5" cy="10.5" r="4" fill="#fff"/><circle cx="10.5" cy="10.5" r="3.1" fill="#4285f4"/></svg>
<svg class="a" style="left:495px;top:873px" width="21" height="21" viewBox="0 0 21 21"><path d="M10.5,2 A8.5,8.5 0 1 1 6,17.8 L2,19 L3.2,15 A8.5,8.5 0 0 1 10.5,2 Z" fill="none" stroke="#2e9e62" stroke-width="1.8"/><path d="M7.5,6.5 Q6.5,7.5 7.5,10 Q9.5,13.5 13,14.5 Q14.5,14.5 14.5,13 L12.8,12 L11.8,12.8 Q10,12 9,10 L9.7,9 L8.8,6.8 Z" fill="#2e9e62"/></svg>
<svg class="a" style="left:536px;top:875px" width="21" height="18" viewBox="0 0 21 18"><path d="M1,2 H8 L10,4 H20 V16 H1 Z" fill="#f5c342"/><rect x="1" y="6" width="19" height="10" fill="#ffd866"/><rect x="6" y="10" width="9" height="6" fill="#3d8fd8"/></svg>
<svg class="a" style="left:577px;top:873px" width="21" height="21" viewBox="0 0 21 21"><rect x="6" y="2" width="14" height="17" fill="#fff" stroke="#a9b3a9" stroke-width="0.6"/><g stroke="#7aa88a" stroke-width="0.8"><path d="M13,4 V17 M8,6 H19 M8,9 H19 M8,12 H19 M8,15 H19"/></g><rect x="1" y="3.5" width="11" height="14" rx="1" fill="#1f7144"/><path d="M3.5,6.5 L9.5,14.5 M9.5,6.5 L3.5,14.5" stroke="#fff" stroke-width="1.8"/></svg>
<svg class="a" style="left:618px;top:873px" width="21" height="21" viewBox="0 0 21 21"><rect x="6" y="2" width="14" height="17" fill="#fff" stroke="#9aa6c0" stroke-width="0.6"/><g stroke="#6a86c0" stroke-width="0.9"><path d="M12,5 H19 M12,8 H19 M12,11 H19 M12,14 H19"/></g><rect x="1" y="3.5" width="11" height="14" rx="1" fill="#2b579a"/><path d="M2.5,7 L4.3,14 L6.5,8.5 L8.7,14 L10.5,7" fill="none" stroke="#fff" stroke-width="1.3"/></svg>
<svg class="a" style="left:659px;top:874px" width="19" height="19" viewBox="0 0 19 19"><rect x="0.5" y="0.5" width="18" height="18" rx="2.5" fill="#c4161c"/><path d="M9.5,3.5 Q10.5,8 15,12.5 Q11,11.8 4.5,14.5 Q8,10 9.5,3.5 Z" fill="none" stroke="#fff" stroke-width="1.5"/></svg>
<div class="a" style="left:690px;top:866.5px;width:40px;height:33.5px;background:#f3eee9"></div>
<svg class="a" style="left:698px;top:873px" width="22" height="22" viewBox="0 0 22 22"><circle cx="11" cy="10.5" r="10" fill="#1a5fe0"/><text x="11" y="13.2" font-family="Liberation Sans" font-weight="bold" font-size="8.5" fill="#fff" text-anchor="middle">zm</text></svg>
<div class="a" style="left:448px;top:898px;width:27px;height:2px;background:#f19a3e"></div>
<div class="a" style="left:489px;top:898px;width:33.5px;height:2px;background:#f19a3e"></div>
<div class="a" style="left:530px;top:898px;width:33px;height:2px;background:#f19a3e"></div>
<div class="a" style="left:571px;top:898px;width:27.5px;height:2px;background:#f19a3e"></div>
<div class="a" style="left:611.5px;top:898px;width:33.0px;height:2px;background:#f19a3e"></div>
<div class="a" style="left:690.5px;top:898px;width:39.0px;height:2px;background:#f19a3e"></div>
<svg class="a" style="left:1235px;top:874px" width="25" height="20" viewBox="0 0 25 20"><circle cx="15.5" cy="7.5" r="5" fill="#f5a623"/><path d="M4,18 A4,4 0 0 1 4.5,10 A5.5,5.5 0 0 1 15,8 A4.8,4.8 0 0 1 20,18 Z" fill="#a8c8ec"/></svg>
<div class="t" style="left:1263px;top:876.5px;font-size:12.5px;color:#333;transform:scaleX(0.89);transform-origin:left top">16°C</div>
<div class="t" style="left:1294.5px;top:876.5px;font-size:12.5px;color:#333;transform:scaleX(0.965);transform-origin:left top">Mostly cloudy</div>
<svg class="a" style="left:1386px;top:879px" width="14" height="9" viewBox="0 0 14 9"><polyline points="1.5,7.5 7,2 12.5,7.5" fill="none" stroke="#222" stroke-width="1.3"/></svg>
<svg class="a" style="left:1406px;top:875px" width="13" height="19" viewBox="0 0 13 19"><rect x="3.5" y="1" width="6" height="11" rx="3" fill="#1a1a1a"/><path d="M1.5,9 A5,5 0 0 0 11.5,9" fill="none" stroke="#1a1a1a" stroke-width="1.4"/><path d="M6.5,14 V17 M3.5,17.5 H9.5" stroke="#1a1a1a" stroke-width="1.4"/></svg>
<svg class="a" style="left:1426px;top:876px" width="15" height="15" viewBox="0 0 15 15"><path d="M3.5,12 A3,3 0 0 1 3,6.5 A4.5,4.5 0 0 1 11.5,5.5 A3.2,3.2 0 0 1 12,12 Z" fill="none" stroke="#444" stroke-width="1.1"/><path d="M1,1 L14,14" stroke="#444" stroke-width="1.1"/></svg>
<svg class="a" style="left:1446px;top:876px" width="15" height="16" viewBox="0 0 15 16"><rect x="3" y="2" width="11" height="8.5" fill="none" stroke="#333" stroke-width="1.1"/><path d="M8.5,10.5 V13.5 M5.5,13.8 H11.5" stroke="#333" stroke-width="1.1"/><rect x="0.5" y="0.5" width="4" height="4" fill="#e8e0d6" stroke="#333" stroke-width="1"/></svg>
<svg class="a" style="left:1466px;top:876px" width="15" height="15" viewBox="0 0 15 15"><path d="M1,5 H4 L8,1.5 V13.5 L4,10 H1 Z" fill="none" stroke="#333" stroke-width="1.1"/><path d="M10,5 Q11.5,7.5 10,10 M12,3.5 Q14.5,7.5 12,11.5" fill="none" stroke="#777" stroke-width="1"/></svg>
<svg class="a" style="left:1486px;top:875px" width="15" height="17" viewBox="0 0 15 17"><rect x="1.5" y="4.5" width="8.5" height="8" rx="1.5" fill="none" stroke="#333" stroke-width="1.2"/><path d="M10,7 L13.5,5 V12 L10,10" fill="none" stroke="#333" stroke-width="1.2"/><path d="M3,1.5 H9 M3,15.5 H9" stroke="#555" stroke-width="1"/></svg>
<div class="t" style="left:1517.8px;top:870.5px;font-size:10.5px;color:#222;transform:scaleX(0.896);transform-origin:left top">13:05</div>
<div class="t" style="left:1505px;top:884.5px;font-size:10.5px;color:#222;transform:scaleX(0.905);transform-origin:left top">10.10.2025.</div>
<svg class="a" style="left:1565px;top:875px" width="15" height="16" viewBox="0 0 15 16"><path d="M0.8,1 H14.2 V12 H8.5 L6.2,14.5 L5,12 H0.8 Z" fill="none" stroke="#222" stroke-width="1.1"/></svg>
</body></html>
